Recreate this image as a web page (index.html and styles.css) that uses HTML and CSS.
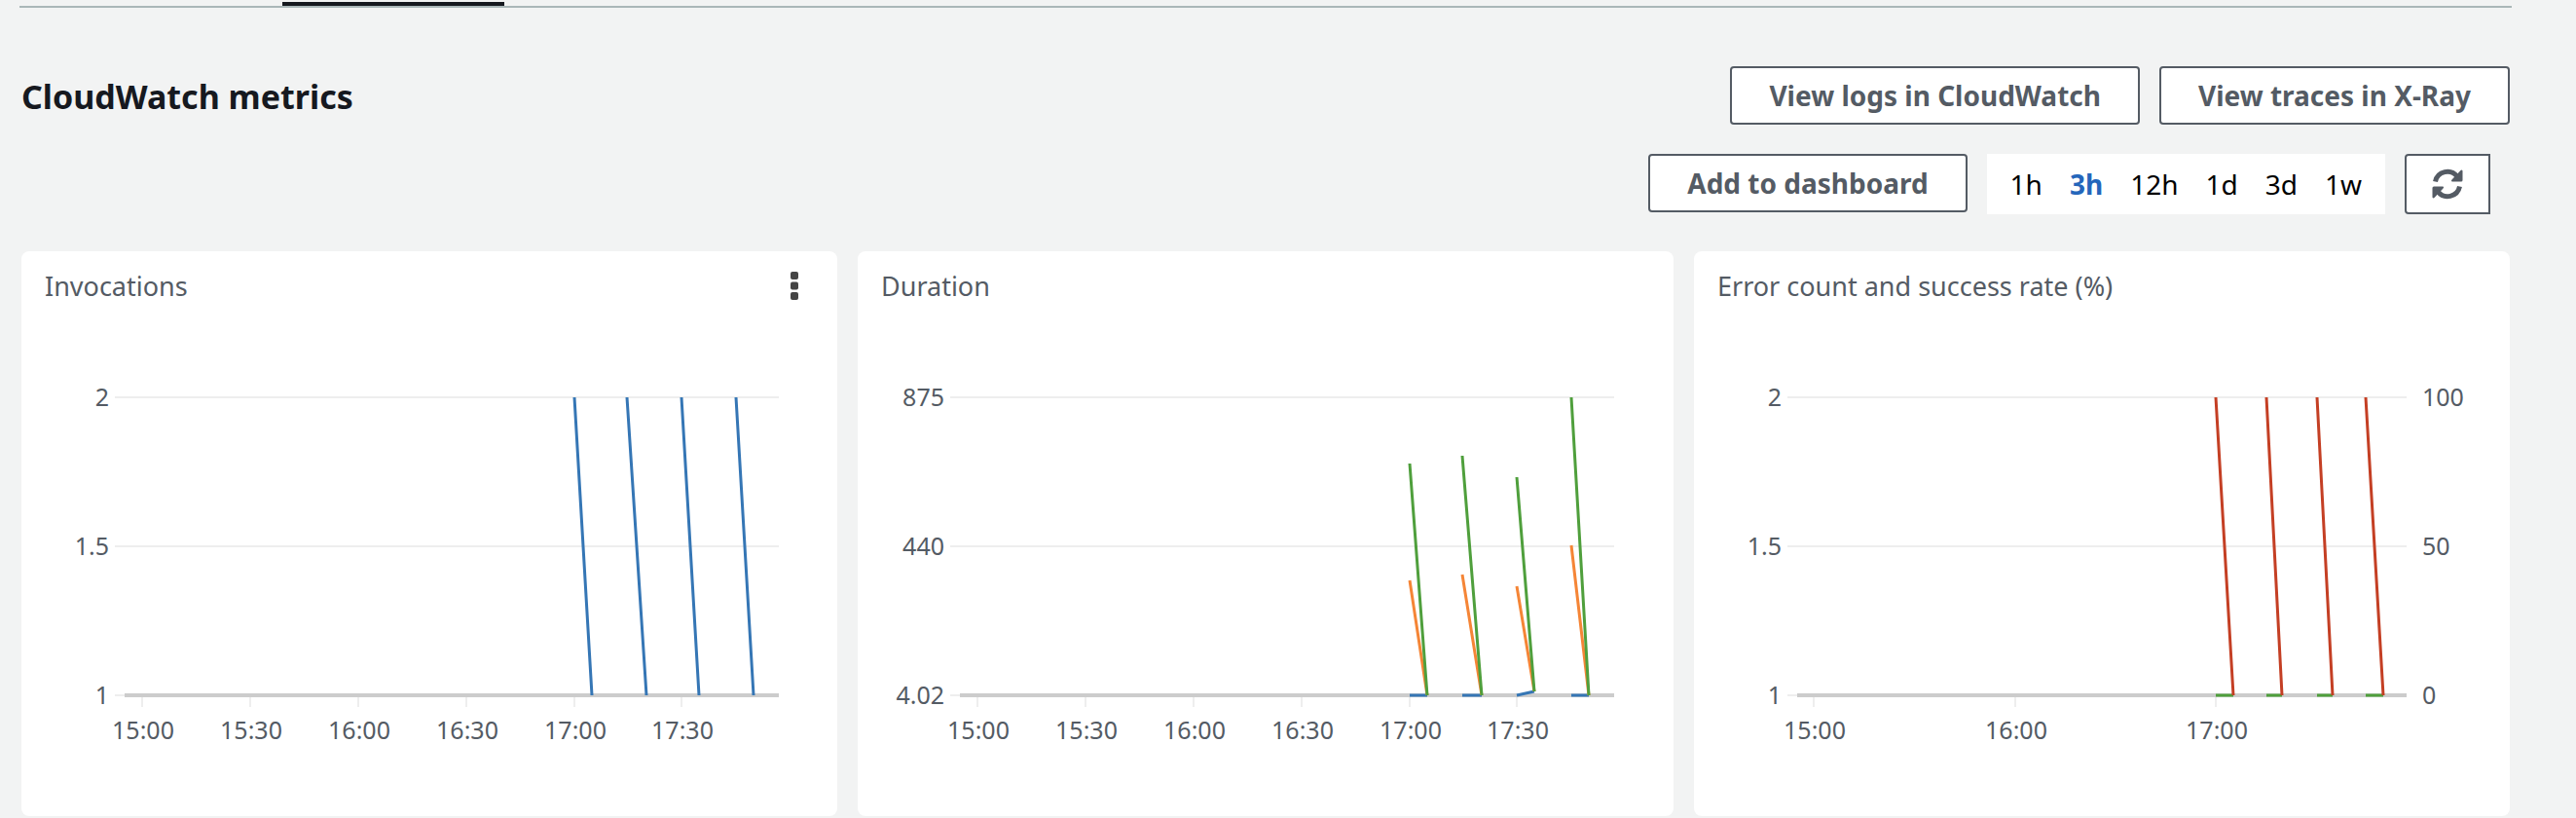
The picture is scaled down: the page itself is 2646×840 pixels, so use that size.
FILE: index.html
```html
<!DOCTYPE html>
<html lang="en">
<head>
<meta charset="utf-8">
<title>CloudWatch metrics</title>
<link rel="stylesheet" href="styles.css">
</head>
<body>
<div class="tabs"><div class="tab-active"></div></div>
<main class="content">
  <header class="header">
    <h1 class="title">CloudWatch metrics</h1>
    <div class="actions">
      <div class="row">
        <button class="btn" type="button">View logs in CloudWatch</button>
        <button class="btn" type="button">View traces in X-Ray</button>
      </div>
      <div class="row row-inset">
        <button class="btn" type="button">Add to dashboard</button>
        <div class="ranges" role="group" aria-label="Time range">
          <button class="range" type="button">1h</button>
          <button class="range range-on" type="button" aria-pressed="true">3h</button>
          <button class="range" type="button">12h</button>
          <button class="range" type="button">1d</button>
          <button class="range" type="button">3d</button>
          <button class="range" type="button">1w</button>
        </div>
        <button class="btn-refresh" type="button" aria-label="Refresh">
          <svg class="icon-refresh" viewBox="0 0 32 32" aria-hidden="true">
            <path class="arc" d="M3.5 13.5A12.6 12.6 0 0 1 26 8.500"/>
            <path class="head" d="M31.500 2.500V12Q31.500 13.500 30 13.500H20.500Q19.300 12.700 20.500 11.500L29.500 2Q31 1 31.500 2.500Z"/>
            <path class="arc" d="M28.500 18.500A12.600 12.600 0 0 1 6 23.500"/>
            <path class="head" d="M.5 29.500V20Q.5 18.500 2 18.500H11.500Q12.700 19.300 11.500 20.500L2.500 30Q1 31 .5 29.500Z"/>
          </svg>
        </button>
      </div>
    </div>
  </header>

  <section class="cards">
    <article class="card">
      <div class="card-head">
        <h2 class="card-title">Invocations</h2>
        <button class="menu" type="button" aria-label="Widget actions">
          <svg class="icon-menu" viewBox="0 0 8 30" aria-hidden="true">
            <rect y="0" width="8" height="8" rx="2"/><rect y="10.500" width="8" height="8" rx="2"/><rect y="21" width="8" height="8" rx="2"/>
          </svg>
        </button>
      </div>
      <svg class="chart" viewBox="0 0 838 500" role="img" aria-label="Invocations">
        <path class="grid" d="M96 70H778M96 223H778M96 376H778"/>
        <path class="tick" d="M124 378V388M235 378V388M346 378V388M457 378V388M568 378V388M678 378V388"/>
        <path class="axis" d="M106 376H778"/>
        <path class="line blue" d="M568 70L586 376M622 70L642 376M678 70L696 376M734 70L752 376"/>
        <g class="end"><text x="90" y="79">2</text><text x="90" y="232">1.5</text><text x="90" y="385">1</text></g>
        <g class="mid"><text x="125" y="421">15:00</text><text x="236" y="421">15:30</text><text x="347" y="421">16:00</text><text x="458" y="421">16:30</text><text x="569" y="421">17:00</text><text x="679" y="421">17:30</text></g>
      </svg>
    </article>
    <article class="card">
      <div class="card-head"><h2 class="card-title">Duration</h2></div>
      <svg class="chart" viewBox="0 0 838 500" role="img" aria-label="Duration">
        <path class="grid" d="M95 70H777M95 223H777M95 376H777"/>
        <path class="tick" d="M123 378V388M234 378V388M345 378V388M456 378V388M567 378V388M677 378V388"/>
        <path class="axis" d="M105 376H777"/>
        <path class="line blue" d="M567 376H585M621 376H641M677 376L695 372M733 376H751"/>
        <path class="line orange" d="M567 258L585 376M621 252L641 376M677 264L695 372M733 222L751 376"/>
        <path class="line green" d="M567 138L585 376M621 130L641 376M677 152L695 372M733 70L751 376"/>
        <g class="end"><text x="89" y="79">875</text><text x="89" y="232">440</text><text x="89" y="385">4.02</text></g>
        <g class="mid"><text x="124" y="421">15:00</text><text x="235" y="421">15:30</text><text x="346" y="421">16:00</text><text x="457" y="421">16:30</text><text x="568" y="421">17:00</text><text x="678" y="421">17:30</text></g>
      </svg>
    </article>
    <article class="card">
      <div class="card-head"><h2 class="card-title">Error count and success rate (%)</h2></div>
      <svg class="chart" viewBox="0 0 838 500" role="img" aria-label="Error count and success rate">
        <path class="grid" d="M96 70H732M96 223H732M96 376H732"/>
        <path class="tick" d="M123 378V388M330 378V388M536 378V388"/>
        <path class="axis" d="M106 376H732"/>
        <path class="line green" d="M536 376H554M588 376H604M640 376H656M690 376H708"/>
        <path class="line red" d="M536 70L554 376M588 70L604 376M640 70L656 376M690 70L708 376"/>
        <g class="end"><text x="90" y="79">2</text><text x="90" y="232">1.5</text><text x="90" y="385">1</text></g>
        <g><text x="748" y="79">100</text><text x="748" y="232">50</text><text x="748" y="385">0</text></g>
        <g class="mid"><text x="124" y="421">15:00</text><text x="331" y="421">16:00</text><text x="537" y="421">17:00</text></g>
      </svg>
    </article>
  </section>
</main>
</body>
</html>
```
FILE: styles.css
```css
* { box-sizing: border-box; }
body {
  margin: 0;
  padding: 2px 66px 2px 20px;
  background: #f2f3f3;
  color: #545b64;
  font-family: "Noto Sans", "Open Sans", sans-serif;
  font-size: 28px;
}
button { font: inherit; color: inherit; margin: 0; cursor: pointer; }
.tabs { border-bottom: 2px solid #aab7b8; padding-left: 270px; }
.tab-active { width: 228px; height: 4px; background: #16191f; }
.content { padding: 60px 2px 0; }
.header { display: flex; justify-content: space-between; align-items: flex-start; padding-bottom: 38px; }
.title { margin: 0; font-size: 34px; line-height: 62px; font-weight: 700; color: #16191f; }
.actions { display: flex; flex-direction: column; align-items: flex-end; gap: 30px; }
.row { display: flex; align-items: flex-start; gap: 20px; }
.row-inset { padding-right: 20px; }
.btn {
  height: 60px;
  padding: 0 38px;
  border: 2px solid #545b64;
  border-radius: 4px;
  background: #fff;
  font-weight: 700;
  line-height: 56px;
}
.ranges { display: flex; gap: 28px; height: 62px; padding: 0 24px; background: #fff; }
.range { padding: 0; border: 0; background: none; color: #000; line-height: 62px; }
.range-on { color: #2466bb; font-weight: 700; }
.btn-refresh {
  display: flex;
  align-items: center;
  justify-content: center;
  width: 88px;
  height: 62px;
  padding: 0;
  border: 2px solid #545b64;
  border-radius: 4px 0 0 4px;
  background: #fff;
}
.icon-refresh { width: 32px; height: 32px; }
.arc { fill: none; stroke: #545b64; stroke-width: 5; }
.head { fill: #545b64; }
.cards { display: grid; grid-template-columns: repeat(3, 1fr); gap: 21px; }
.card { background: #fff; border-radius: 8px; overflow: hidden; }
.card-head { display: flex; justify-content: space-between; align-items: center; height: 72px; padding: 0 40px 0 24px; }
.card-title { margin: 0; font-size: 27px; line-height: 40px; font-weight: 400; }
.menu { display: flex; padding: 0; border: 0; background: none; }
.icon-menu { width: 8px; height: 30px; fill: #444; }
.chart { display: block; width: 100%; margin-top: 8px; fill: #545b64; font-size: 25px; }
.grid { fill: none; stroke: #eee; stroke-width: 2; }
.tick { fill: none; stroke: #eee; stroke-width: 2; }
.axis { fill: none; stroke: #ccc; stroke-width: 4; }
.line { fill: none; stroke-width: 3; }
.blue { stroke: #3576b5; }
.orange { stroke: #f58536; }
.green { stroke: #4f9f3c; }
.red { stroke: #c43f24; }
.end { text-anchor: end; }
.mid { text-anchor: middle; }
```
